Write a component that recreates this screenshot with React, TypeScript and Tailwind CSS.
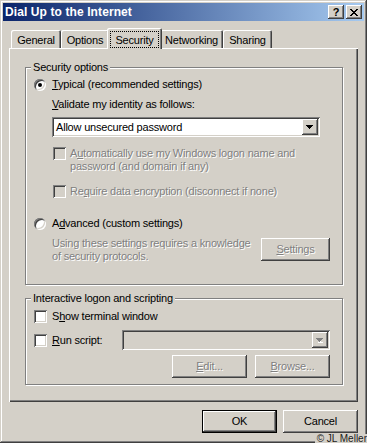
import type { ReactNode } from 'react'

const raised =
  'shadow-[inset_-1px_-1px_0_#404040,inset_1px_1px_0_#ffffff,inset_-2px_-2px_0_#808080,inset_2px_2px_0_#d4d0c8]'
const sunken =
  'shadow-[inset_1px_1px_0_#808080,inset_-1px_-1px_0_#ffffff,inset_2px_2px_0_#404040,inset_-2px_-2px_0_#d4d0c8]'
const etched = 'border border-[#808080] shadow-[inset_1px_1px_0_#ffffff,1px_1px_0_#ffffff]'
const dim = 'text-[#808080] [text-shadow:1px_1px_0_#ffffff]'

function Radio({ checked }: { checked?: boolean }) {
  return (
    <span className={`flex h-[12px] w-[12px] shrink-0 items-center justify-center rounded-full bg-white ${sunken}`}>
      {checked && <span className="h-[4px] w-[4px] rounded-full bg-black" />}
    </span>
  )
}

function Checkbox({ disabled }: { disabled?: boolean }) {
  return <span className={`h-[13px] w-[13px] shrink-0 ${sunken} ${disabled ? 'bg-[#d4d0c8]' : 'bg-white'}`} />
}

function Arrow({ disabled }: { disabled?: boolean }) {
  const fill = disabled ? '#808080' : '#000000'
  return (
    <svg width="8" height="5" viewBox="0 0 8 5" shapeRendering="crispEdges">
      {disabled && <path d="M2 4h5v1H2zM4 3h1v1H4z" fill="#ffffff" />}
      <path d="M0 0h7v1H0zM1 1h5v1H1zM2 2h3v1H2zM3 3h1v1H3z" fill={fill} />
    </svg>
  )
}

function Combo({ text, disabled, width }: { text?: string; disabled?: boolean; width: string }) {
  return (
    <div className={`flex h-[20px] shrink-0 items-center p-[2px] ${width} ${sunken} ${disabled ? 'bg-[#d4d0c8]' : 'bg-white'}`}>
      <span className="flex-1 pl-[2px] leading-[16px]">{text}</span>
      <span className={`flex h-[16px] w-[16px] items-center justify-center bg-[#d4d0c8] ${raised}`}>
        <Arrow disabled={disabled} />
      </span>
    </div>
  )
}

function Button({
  children,
  disabled,
  primary,
  width = 'w-[75px]',
  className = '',
}: {
  children: ReactNode
  disabled?: boolean
  primary?: boolean
  width?: string
  className?: string
}) {
  return (
    <div className={`h-[23px] shrink-0 ${width} ${primary ? 'border border-black' : ''} ${className}`}>
      <div className={`flex h-full w-full items-center justify-center bg-[#d4d0c8] ${raised} ${disabled ? dim : ''}`}>
        {children}
      </div>
    </div>
  )
}

function Group({ label, className, children }: { label: string; className: string; children: ReactNode }) {
  return (
    <div className={`relative w-[318px] ${etched} ${className}`}>
      <span className="absolute left-[5px] top-[-7px] bg-[#d4d0c8] px-[2px] leading-[13px]">{label}</span>
      {children}
    </div>
  )
}

const tabs = [
  { name: 'General', w: 'w-[50px]' },
  { name: 'Options', w: 'w-[48px]' },
  { name: 'Security', w: 'w-[51px]', active: true },
  { name: 'Networking', w: 'w-[63px]' },
  { name: 'Sharing', w: 'w-[49px]' },
]

export default function App() {
  return (
    <div className="relative flex h-[443px] w-[367px] flex-col overflow-hidden bg-[#d4d0c8] p-[3px] font-['Liberation_Sans',Arial,sans-serif] text-[11px] leading-[13px] tracking-[-0.2px] text-black shadow-[inset_-1px_-1px_0_#404040,inset_1px_1px_0_#d4d0c8,inset_-2px_-2px_0_#808080,inset_2px_2px_0_#ffffff]">
      {/* title bar */}
      <div className="flex h-[18px] items-center bg-[linear-gradient(to_right,#0a246a,#a6caf0)] pl-[2px] pr-[2px]">
        <span className="flex-1 text-[12px] font-bold leading-[18px] tracking-[0.1px] text-white">Dial Up to the Internet</span>
        <span className={`flex h-[14px] w-[16px] items-center justify-center bg-[#d4d0c8] text-[11px] font-bold leading-[14px] ${raised}`}>?</span>
        <span className={`ml-[2px] flex h-[14px] w-[16px] items-center justify-center bg-[#d4d0c8] ${raised}`}>
          <svg width="8" height="7" viewBox="0 0 8 7" shapeRendering="crispEdges">
            <path d="M0 0h2v1H0zM1 1h2v1H1zM2 2h2v1H2zM3 3h2v1H3zM2 4h2v1H2zM1 5h2v1H1zM0 6h2v1H0zM6 0h2v1H6zM5 1h2v1H5zM4 2h2v1H4zM4 4h2v1H4zM5 5h2v1H5zM6 6h2v1H6z" fill="#000" />
          </svg>
        </span>
      </div>

      {/* tabs */}
      <div className="ml-[6px] mt-[7px] flex h-[20px] items-end pl-[2px]">
        {tabs.map((t) =>
          t.active ? (
            <div
              key={t.name}
              className={`relative z-10 -mx-[2px] -mb-[1px] box-content flex h-[21px] items-start justify-center rounded-t-[2px] bg-[#d4d0c8] px-[2px] pt-[0px] ${t.w} shadow-[inset_1px_1px_0_#ffffff,inset_-1px_0_0_#404040,inset_-2px_0_0_#808080]`}
            >
              <span className="mt-[3px] flex h-[17px] w-[49px] items-center justify-center border border-dotted border-black pt-[1px]">
                {t.name}
              </span>
            </div>
          ) : (
            <div
              key={t.name}
              className={`flex h-[18px] items-center justify-center rounded-t-[2px] pt-[2px] ${t.w} shadow-[inset_1px_1px_0_#ffffff,inset_-1px_0_0_#404040,inset_-2px_0_0_#808080]`}
            >
              {t.name}
            </div>
          ),
        )}
      </div>

      {/* tab panel */}
      <div className="mx-[6px] h-[354px] px-[16px] pt-[19px] shadow-[inset_1px_1px_0_#ffffff,inset_-1px_-1px_0_#404040,inset_-2px_-2px_0_#808080]">
        <Group label="Security options" className="h-[218px]">
          <div className="mt-[10px] flex h-[13px] items-center gap-[6px] pl-[8px]">
            <Radio checked />
            <span>
              <u>T</u>ypical (recommended settings)
            </span>
          </div>
          <div className="mt-[7px] h-[13px] pl-[26px]">
            <u>V</u>alidate my identity as follows:
          </div>
          <div className="mt-[6px] pl-[26px]">
            <Combo text="Allow unsecured password" width="w-[268px]" />
          </div>
          <div className="mt-[10px] flex items-start gap-[4px] pl-[27px]">
            <Checkbox disabled />
            <span className={dim}>
              A<u>u</u>tomatically use my Windows logon name and
              <br />
              password (and domain if any)
            </span>
          </div>
          <div className="mt-[12px] flex h-[13px] items-center gap-[4px] pl-[27px]">
            <Checkbox disabled />
            <span className={dim}>
              Re<u>q</u>uire data encryption (disconnect if none)
            </span>
          </div>
          <div className="mt-[19px] flex h-[13px] items-center gap-[6px] pl-[8px]">
            <Radio />
            <span>
              A<u>d</u>vanced (custom settings)
            </span>
          </div>
          <div className="mt-[7px] flex items-start pl-[26px]">
            <span className={`w-[209px] ${dim}`}>
              Using these settings requires a knowledge
              <br />
              of security protocols.
            </span>
            <Button disabled width="w-[69px]" className="mt-[1px]">
              <span>
                <u>S</u>ettings
              </span>
            </Button>
          </div>
        </Group>

        <Group label="Interactive logon and scripting" className="mt-[13px] h-[87px]">
          <div className="mt-[11px] flex h-[13px] items-center gap-[5px] pl-[8px]">
            <Checkbox />
            <span>
              S<u>h</u>ow terminal window
            </span>
          </div>
          <div className="mt-[7px] flex h-[20px] items-center pl-[8px]">
            <Checkbox />
            <span className="ml-[5px] w-[70px]">
              <u>R</u>un script:
            </span>
            <Combo disabled width="w-[208px]" />
          </div>
          <div className="mt-[5px] flex justify-end gap-[8px] pr-[12px]">
            <Button disabled>
              <span>
                <u>E</u>dit...
              </span>
            </Button>
            <Button disabled>
              <span>
                <u>B</u>rowse...
              </span>
            </Button>
          </div>
        </Group>
      </div>

      {/* dialog buttons */}
      <div className="mt-[8px] flex justify-end gap-[6px] pr-[6px]">
        <Button primary>OK</Button>
        <Button>Cancel</Button>
      </div>

      <span className="absolute -bottom-[1px] right-0 bg-[#d4d0c8] pl-[2px] text-[10px] leading-[10px] tracking-normal text-[#1a1a1a]">
        © JL Meller
      </span>
    </div>
  )
}
